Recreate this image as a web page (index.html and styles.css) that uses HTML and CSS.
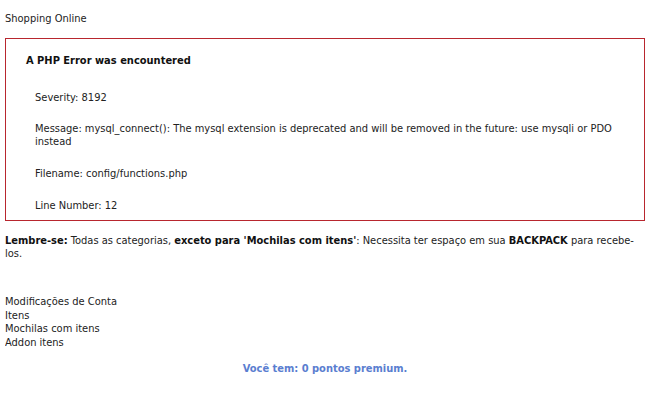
FILE: index.html
```html
<!DOCTYPE html>
<html>

<head>
    <title>Shopping Online</title>
    <link rel="stylesheet" href="styles.css">
</head>

<body>
    <div class="page_title">Shopping Online</div>

    <div class="php_error">
        <h4>A PHP Error was encountered</h4>
        <p class="first">Severity: 8192</p>
        <p class="msg">Message: mysql_connect(): The mysql extension is deprecated and will be removed in the future: use mysqli or PDO instead</p>
        <p>Filename: config/functions.php</p>
        <p>Line Number: 12</p>
    </div>

    <p class="notice"><b>Lembre-se:</b> Todas as categorias, <b>exceto para 'Mochilas com itens'</b>: Necessita ter espaço em sua <b>BACKPACK</b> para recebe-los.</p>

    <div class="menu">
        <a href="#">Modificações de Conta</a>
        <a href="#">Itens</a>
        <a href="#">Mochilas com itens</a>
        <a href="#">Addon itens</a>
    </div>

    <p class="points">Você tem: 0 pontos premium.</p>
</body>

</html>
```

FILE: styles.css
```css
body {
    margin: 5px;
    font-family: "DejaVu Sans Condensed", "DejaVu Sans", sans-serif;
    font-size: 11px;
    line-height: 13px;
    color: #222;
}

.page_title {
    margin-top: 7px;
}

.php_error {
    margin-top: 13px;
    border: 1px solid #b8262e;
    padding: 0 0 8px 20px;
}

.php_error h4 {
    margin: 15px 0 0 0;
    font-size: 11px;
    color: #111;
}

.php_error p {
    margin: 19px 0 0 9px;
}

.php_error p.first {
    margin-top: 24px;
}

.php_error p.msg {
    margin-top: 18px;
}

.notice {
    margin: 13px 0 0 0;
}

.notice b {
    color: #111;
}

.menu {
    margin-top: 35px;
    line-height: 13.5px;
}

.menu a {
    display: block;
    color: #222;
    text-decoration: none;
}

.points {
    margin: 13px 0 0 0;
    text-align: center;
    font-weight: bold;
    color: #5a7ed0;
}
```
